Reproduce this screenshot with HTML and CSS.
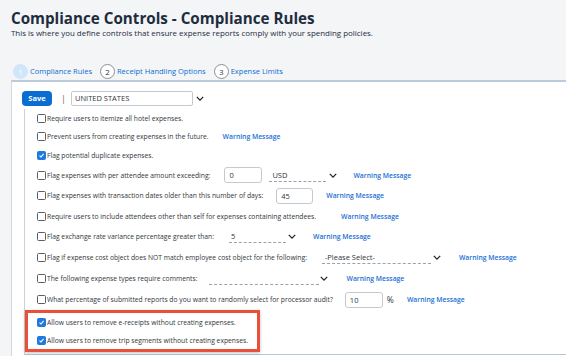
FILE: index.html
```html
<!DOCTYPE html>
<html lang="en">
<head>
<meta charset="utf-8">
<title>Compliance Rules</title>
<link rel="stylesheet" href="styles.css">
</head>
<body>
<header class="head">
  <h1 class="title">Compliance Controls - Compliance Rules</h1>
  <p class="subtitle">This is where you define controls that ensure expense reports comply with your spending policies.</p>
</header>
<nav class="tabs">
  <a class="tab active"><span class="step">1</span>Compliance Rules</a>
  <a class="tab"><span class="step">2</span>Receipt Handling Options</a>
  <a class="tab"><span class="step">3</span>Expense Limits</a>
</nav>
<main class="panel">
  <div class="toolbar">
    <button class="save">Save</button>
    <span class="sep">|</span>
    <div class="country">UNITED STATES</div>
    <svg class="chev big" viewBox="0 0 10 6"><path d="M1 1l4 4 4-4" fill="none" stroke="#222" stroke-width="1.6"/></svg>
  </div>
  <section class="rules">
    <div class="row h18"><span class="cb"></span><span class="lbl">Require users to itemize all hotel expenses.</span></div>
    <div class="row h19"><span class="cb"></span><span class="lbl">Prevent users from creating expenses in the future.</span><a class="warn w2">Warning Message</a></div>
    <div class="row h19"><span class="cb on"><svg viewBox="0 0 10 10"><path d="M2.2 5.2l2 2 3.8-4.6" fill="none" stroke="#fff" stroke-width="1.5"/></svg></span><span class="lbl">Flag potential duplicate expenses.</span></div>
    <div class="row h20"><span class="cb"></span><span class="lbl">Flag expenses with per attendee amount exceeding:</span><span class="inp i4">0</span><span class="sel s4">USD</span><svg class="chev" viewBox="0 0 10 6"><path d="M1 1l4 4 4-4" fill="none" stroke="#222" stroke-width="1.6"/></svg><a class="warn w4">Warning Message</a></div>
    <div class="row h21"><span class="cb"></span><span class="lbl">Flag expenses with transaction dates older than this number of days:</span><span class="inp i5">45</span><a class="warn w5">Warning Message</a></div>
    <div class="row h20"><span class="cb"></span><span class="lbl">Require users to include attendees other than self for expenses containing attendees.</span><a class="warn w6">Warning Message</a></div>
    <div class="row h21"><span class="cb"></span><span class="lbl">Flag exchange rate variance percentage greater than:</span><span class="sel s7">5</span><svg class="chev" viewBox="0 0 10 6"><path d="M1 1l4 4 4-4" fill="none" stroke="#222" stroke-width="1.6"/></svg><a class="warn w7">Warning Message</a></div>
    <div class="row h21"><span class="cb"></span><span class="lbl">Flag if expense cost object does NOT match employee cost object for the following:</span><span class="sel s8">-Please Select-</span><svg class="chev" viewBox="0 0 10 6"><path d="M1 1l4 4 4-4" fill="none" stroke="#222" stroke-width="1.6"/></svg><a class="warn w8">Warning Message</a></div>
    <div class="row h21"><span class="cb"></span><span class="lbl">The following expense types require comments:</span><span class="sel s9"></span><svg class="chev" viewBox="0 0 10 6"><path d="M1 1l4 4 4-4" fill="none" stroke="#222" stroke-width="1.6"/></svg><a class="warn w9">Warning Message</a></div>
    <div class="row h21"><span class="cb"></span><span class="lbl">What percentage of submitted reports do you want to randomly select for processor audit?</span><span class="inp i10">10</span><span class="pct">%</span><a class="warn w10">Warning Message</a></div>
    <div class="highlight">
      <div class="row h18"><span class="cb on"><svg viewBox="0 0 10 10"><path d="M2.2 5.2l2 2 3.8-4.6" fill="none" stroke="#fff" stroke-width="1.5"/></svg></span><span class="lbl">Allow users to remove e-receipts without creating expenses.</span></div>
      <div class="row h18"><span class="cb on"><svg viewBox="0 0 10 10"><path d="M2.2 5.2l2 2 3.8-4.6" fill="none" stroke="#fff" stroke-width="1.5"/></svg></span><span class="lbl">Allow users to remove trip segments without creating expenses.</span></div>
    </div>
  </section>
</main>
</body>
</html>
```
FILE: styles.css
```css
* { box-sizing: border-box; }
html, body { margin: 0; padding: 0; }
body {
  width: 566px;
  height: 356px;
  overflow: hidden;
  background: #f4f5f7;
  font-family: "Open Sans", "Liberation Sans", sans-serif;
  color: #32363a;
}
.head { padding: 8px 11px 0; }
.title {
  margin: 0;
  font-size: 15.2px;
  line-height: 20px;
  font-weight: 700;
  color: #1d2d3e;
}
.subtitle {
  margin: 0;
  font-size: 7.95px;
  line-height: 10px;
  color: #1d2d3e;
}
.tabs {
  display: flex;
  align-items: center;
  gap: 8px;
  height: 42px;
  padding: 24px 0 0 13px;
}
.tab {
  display: flex;
  align-items: center;
  gap: 2px;
  font-size: 7.5px;
  color: #0a6ed1;
  font-weight: 500;
}
.step {
  width: 15px;
  height: 15px;
  border-radius: 50%;
  border: 1px solid #89919a;
  background: #fff;
  color: #32363a;
  display: flex;
  align-items: center;
  justify-content: center;
  font-size: 8px;
  font-weight: 400;
}
.tab.active .step {
  border-color: #d1e6fb;
  background: #d1e6fb;
  color: #fff;
}
.panel {
  margin-left: 11px;
  background: #fff;
  border-top: 2px solid #bccbda;
  border-left: 1px solid #d5d9de;
  height: 276px;
}
.toolbar {
  display: flex;
  align-items: center;
  height: 24px;
  padding: 8px 0 0 10px;
}
.save {
  width: 30px;
  height: 15px;
  border: 0;
  border-radius: 4px;
  background: #0a6ed1;
  color: #fff;
  font-family: inherit;
  font-size: 7.5px;
  font-weight: 700;
  padding: 0;
}
.sep { margin: 0 5px 0 9px; font-size: 9px; color: #6a6d70; }
.country {
  width: 122px;
  height: 15px;
  border: 1px solid #c6cacf;
  border-radius: 2px;
  font-size: 7.5px;
  line-height: 13px;
  padding-left: 3px;
  color: #32363a;
}
.chev { flex: none; width: 8px; height: 5px; }
.chev.big { margin-left: 3px; }
.rules {
  margin: 3px 0 0 12px;
  border-left: 1px solid #ccd1d6;
  border-bottom: 1px solid #b9c6d3;
  padding-left: 12px;
  height: 246px;
}
.row {
  display: flex;
  align-items: center;
  height: 19px;
  font-size: 6.75px;
  color: #32363a;
}
.row.h18 { height: 18px; }
.row.h19 { height: 19px; }
.row.h20 { height: 20px; }
.row.h21 { height: 21px; }
.cb {
  flex: none;
  width: 9px;
  height: 9px;
  border: 1px solid #5b5e62;
  border-radius: 1.5px;
  background: #fff;
  margin-right: 1px;
  display: flex;
}
.cb.on { background: #1f7ae0; border-color: #1f7ae0; }
.cb svg { width: 100%; height: 100%; }
.lbl { white-space: nowrap; }
.warn {
  color: #1b6fd6;
  font-size: 6.8px;
  font-weight: 600;
  white-space: nowrap;
}
.inp {
  flex: none;
  height: 16px;
  border: 1px solid #c6cacf;
  border-radius: 3px;
  font-size: 7.5px;
  line-height: 14px;
  padding-left: 4px;
}
.sel {
  flex: none;
  height: 13px;
  border-bottom: 1px dashed #9aa3ad;
  font-size: 7.5px;
  line-height: 12px;
}
.w2 { margin-left: 14px; }
.i4 { width: 38px; margin-left: 14px; }
.s4 { width: 57px; margin-left: 7px; padding-left: 3px; }
.s4 + .chev { margin-left: 3px; }
.w4 { margin-left: 16px; }
.i5 { width: 37px; margin-left: 13px; }
.w5 { margin-left: 13px; }
.w6 { margin-left: 25px; }
.s7 { width: 57px; margin-left: 15px; padding-left: 2px; }
.s7 + .chev { margin-left: 2px; }
.w7 { margin-left: 17px; }
.s8 { width: 109px; margin-left: 15px; padding-left: 3px; }
.s8 + .chev { margin-left: 2px; }
.w8 { margin-left: 18px; }
.s9 { width: 110px; margin-left: 12px; }
.s9 + .chev { margin-left: 1px; }
.w9 { margin-left: 18px; }
.i10 { width: 38px; margin-left: 12px; }
.pct { margin-left: 4px; font-size: 8.5px; }
.w10 { margin-left: 13px; }
.highlight {
  width: 235px;
  margin-left: -12px;
  padding-left: 9px;
  border: 3px solid #e8503a;
  box-shadow: 0 1px 3px rgba(0,0,0,0.25);
}
```
